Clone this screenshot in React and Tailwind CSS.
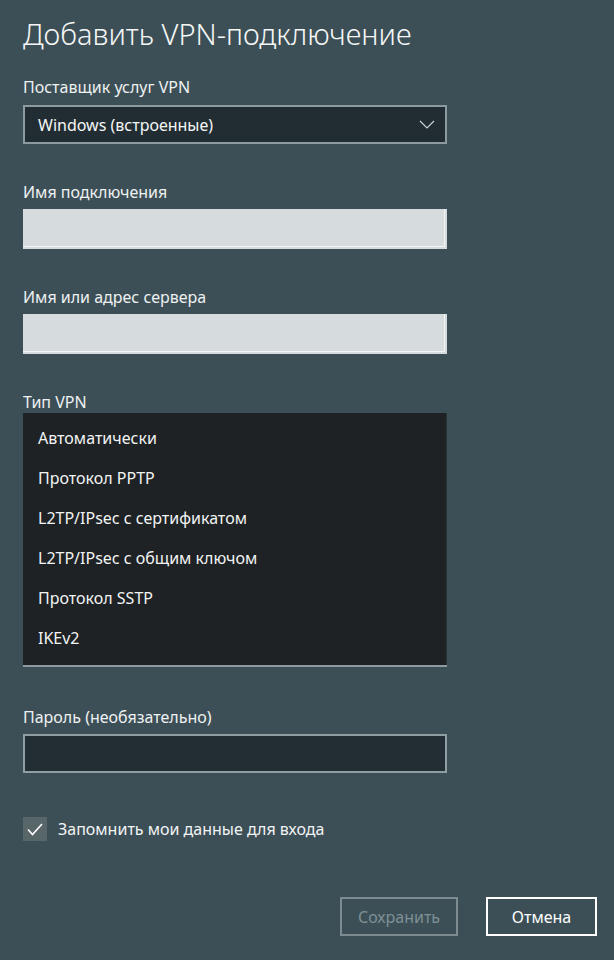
import React, { useState } from "react";

const vpnTypes = [
  "Автоматически",
  "Протокол PPTP",
  "L2TP/IPsec с сертификатом",
  "L2TP/IPsec с общим ключом",
  "Протокол SSTP",
  "IKEv2",
];

const font = { fontFamily: '"Noto Sans", "Open Sans", sans-serif' };

const Label = ({ children, className = "" }) => (
  <div className={`text-[16px] leading-[20px] text-[#eef1f1] ${className}`}>
    {children}
  </div>
);

const LightInput = ({ className = "" }) => (
  <input
    type="text"
    className={`block w-[424px] h-[40px] bg-[#d6dcdd] outline-none shadow-[inset_-2px_-2px_0_#d6dcdd,inset_-3px_-3px_0_#f3f5f5] ${className}`}
  />
);

export default function App() {
  const [remember, setRemember] = useState(true);

  return (
    <div
      className="min-h-[960px] w-[614px] bg-[#3c4f57] pl-[23px] pt-[16px] text-white"
      style={font}
    >
      <h1 className="text-[29px] leading-[36px] font-light text-[#f4f6f6]">
        Добавить VPN-подключение
      </h1>

      {/* Поставщик */}
      <Label className="mt-[25px]">Поставщик услуг VPN</Label>
      <div className="mt-[8px] w-[424px] h-[39px] border-2 border-[#8d9b9f] bg-[#212d32] flex items-center justify-between pl-[13px] pr-[10px]">
        <span className="text-[16px] text-[#f4f6f6]">Windows (встроенные)</span>
        <svg width="16" height="9" viewBox="0 0 16 9" fill="none">
          <path d="M1 1l7 7 7-7" stroke="#c9d1d3" strokeWidth="1.2" />
        </svg>
      </div>

      {/* Имя подключения */}
      <Label className="mt-[38px]">Имя подключения</Label>
      <LightInput className="mt-[7px]" />

      {/* Сервер */}
      <Label className="mt-[38px]">Имя или адрес сервера</Label>
      <LightInput className="mt-[7px]" />

      {/* Тип VPN - открытый список */}
      <Label className="mt-[38px]">Тип VPN</Label>
      <div className="mt-[1px] w-[424px]">
        <div className="h-[252px] bg-[#1e2224] pt-[5px] pb-[7px] border-r border-[#2c3336]">
          {vpnTypes.map((t) => (
            <div
              key={t}
              className="h-[40px] flex items-center pl-[15px] text-[16px] text-[#f2f4f4]"
            >
              {t}
            </div>
          ))}
        </div>
        <div className="h-[2px] bg-[#8d9b9f]" />
      </div>

      {/* Пароль */}
      <Label className="mt-[40px]">Пароль (необязательно)</Label>
      <input
        type="password"
        className="mt-[7px] block w-[424px] h-[39px] border-2 border-[#8f9ea2] bg-[#222e33] outline-none"
      />

      {/* Запомнить */}
      <label
        className="mt-[44px] flex items-center gap-[11px] h-[24px] cursor-pointer"
        onClick={() => setRemember(!remember)}
      >
        <span className="w-[24px] h-[24px] bg-[#586569] flex items-center justify-center">
          {remember && (
            <svg width="16" height="13" viewBox="0 0 16 13" fill="none">
              <path d="M1 6.5l4.5 5L15 1" stroke="#ffffff" strokeWidth="1.6" />
            </svg>
          )}
        </span>
        <span className="text-[16px] text-[#f2f4f4]">
          Запомнить мои данные для входа
        </span>
      </label>

      {/* Кнопки */}
      <div className="mt-[56px] flex justify-end gap-[28px] pr-[17px]">
        <button
          disabled
          className="w-[118px] h-[39px] border-2 border-[#7c8c91] text-[16px] text-[#7f8f94]"
        >
          Сохранить
        </button>
        <button className="w-[111px] h-[39px] border-2 border-white text-[16px] text-white">
          Отмена
        </button>
      </div>
    </div>
  );
}
